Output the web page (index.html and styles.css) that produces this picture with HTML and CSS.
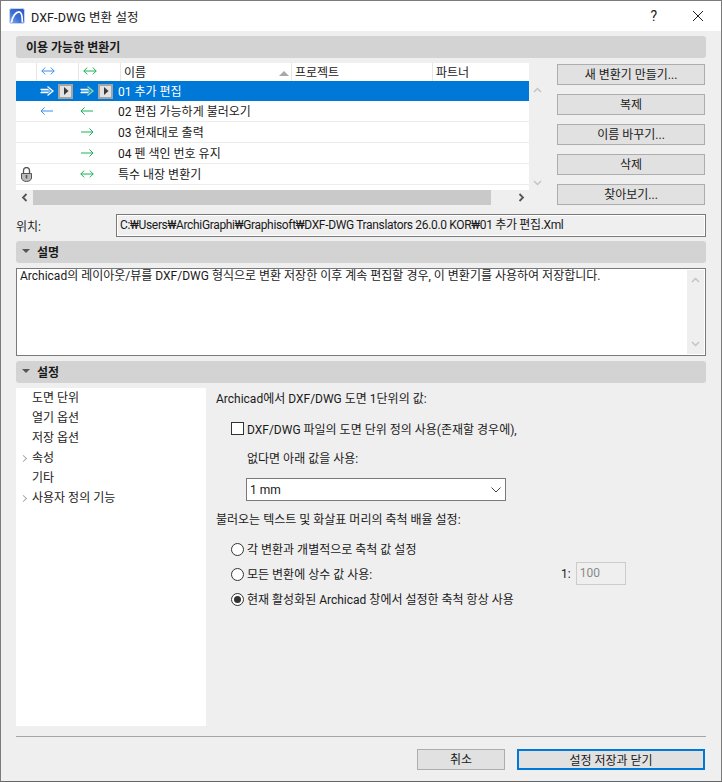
FILE: index.html
```html
<!DOCTYPE html>
<html lang="ko">
<head>
<meta charset="utf-8">
<title>DXF-DWG 변환 설정</title>
<link rel="stylesheet" href="styles.css">
</head>
<body>
<svg class="defs" width="0" height="0" aria-hidden="true">
  <defs>
    <symbol id="both" viewBox="0 0 14 10"><path d="M.8 5h12.4M4.2 1.600.8 5l3.400 3.400M9.800 1.600 13.200 5 9.800 8.400" fill="none" stroke="currentColor" stroke-width="1"/></symbol>
    <symbol id="left" viewBox="0 0 14 10"><path d="M1 5h12M4.600 1.400 1 5l3.600 3.600" fill="none" stroke="currentColor" stroke-width="1"/></symbol>
    <symbol id="right" viewBox="0 0 14 10"><path d="M1 5h11.500M9.400 1.400 13 5 9.400 8.600" fill="none" stroke="currentColor" stroke-width="1"/></symbol>
    <symbol id="fat" viewBox="0 0 14 10"><path d="M.5 3.300h8M.5 6.700h8" fill="none" stroke="#fff" stroke-width="1.300"/><path d="M1 5h8" stroke="#fff" stroke-opacity=".45" stroke-width="2.200" fill="none"/><path d="M7.500.6 13 5 7.500 9.400" fill="none" stroke="currentColor" stroke-width="1.300"/><path d="M8.500 3.300 10.300 5 8.500 6.700" fill="none" stroke="currentColor" stroke-opacity=".7" stroke-width="1"/></symbol>
    <symbol id="tri" viewBox="0 0 8 8"><path d="M2 0v8l4.500-4z" fill="#3c3c3c"/></symbol>
    <symbol id="up" viewBox="0 0 9 6"><path d="M1 5 4.500 1.500 8 5" fill="none" stroke="currentColor" stroke-width="1.500"/></symbol>
    <symbol id="down" viewBox="0 0 9 6"><path d="M1 1 4.500 4.500 8 1" fill="none" stroke="currentColor" stroke-width="1.500"/></symbol>
    <linearGradient id="logoFill" x1="0" y1="1" x2="1" y2="0"><stop offset="0" stop-color="#8fb0f0"/><stop offset=".45" stop-color="#3b6fd8"/><stop offset="1" stop-color="#2b57b8"/></linearGradient>
  </defs>
</svg>
<div class="window">
  <header class="titlebar">
    <svg class="logo" width="16" height="16" viewBox="0 0 16 16"><rect x=".5" y=".5" width="15" height="15" rx="2" fill="url(#logoFill)" stroke="#c6d4f0"/><path d="M2.500 14.500C3.500 8 7 3.800 10 3.800c2.600 0 3.400 4.500 3.400 10.700" fill="none" stroke="#fff" stroke-width="1.700"/></svg>
    <span class="title">DXF-DWG 변환 설정</span>
    <span class="help">?</span>
    <svg class="close" width="12" height="12" viewBox="0 0 12 12"><path d="M1 1l10 10M11 1 1 11" stroke="#222" stroke-width="1" fill="none"/></svg>
  </header>

  <main class="content">
    <div class="section strong">이용 가능한 변환기</div>

    <div class="translators">
      <div class="listwrap">
        <div class="table">
          <div class="row head">
            <span class="c0"></span>
            <span class="c1 sep"><svg class="ar blue"><use href="#both"/></svg></span>
            <span class="c2 sep"><svg class="ar green"><use href="#both"/></svg></span>
            <span class="c3 sep">이름<i class="sort"></i></span>
            <span class="c4 sep">프로젝트</span>
            <span class="c5 sep">파트너</span>
          </div>
          <div class="row sel">
            <span class="c0"></span>
            <span class="c1"><svg class="ar white"><use href="#fat"/></svg><b class="play"><svg width="8" height="8"><use href="#tri"/></svg></b></span>
            <span class="c2"><svg class="ar ltgreen"><use href="#fat"/></svg><b class="play"><svg width="8" height="8"><use href="#tri"/></svg></b></span>
            <span class="name">01 추가 편집</span>
          </div>
          <div class="row">
            <span class="c0"></span>
            <span class="c1"><svg class="ar blue"><use href="#left"/></svg></span>
            <span class="c2"><svg class="ar green"><use href="#left"/></svg></span>
            <span class="name">02 편집 가능하게 불러오기</span>
          </div>
          <div class="row">
            <span class="c0"></span>
            <span class="c1"></span>
            <span class="c2"><svg class="ar green"><use href="#right"/></svg></span>
            <span class="name">03 현재대로 출력</span>
          </div>
          <div class="row">
            <span class="c0"></span>
            <span class="c1"></span>
            <span class="c2"><svg class="ar green"><use href="#right"/></svg></span>
            <span class="name">04 펜 색인 번호 유지</span>
          </div>
          <div class="row">
            <span class="c0"><svg width="11" height="15" viewBox="0 0 11 15"><path d="M2.500 6V3.500a3 3 0 0 1 6 0V6" fill="none" stroke="#555" stroke-width="1.300"/><path d="M.5 6.500h10V11c0 2-2.500 3.500-5 3.500S.5 13 .5 11z" fill="#bcbcbc" stroke="#555"/><rect x="4.700" y="8" width="1.600" height="3.500" fill="#555"/></svg></span>
            <span class="c1"></span>
            <span class="c2"><svg class="ar green"><use href="#both"/></svg></span>
            <span class="name">특수 내장 변환기</span>
          </div>
        </div>
        <div class="vscroll">
          <svg class="sa" width="9" height="6"><use href="#up"/></svg>
          <svg class="sa" width="9" height="6"><use href="#down"/></svg>
        </div>
        <div class="hscroll">
          <svg width="7" height="9" viewBox="0 0 7 9"><path d="M5.500 1 2 4.500 5.500 8" fill="none" stroke="#555" stroke-width="1.800"/></svg>
          <span class="thumb"></span>
          <svg width="7" height="9" viewBox="0 0 7 9"><path d="M1.500 1 5 4.500 1.500 8" fill="none" stroke="#555" stroke-width="1.800"/></svg>
        </div>
      </div>
      <div class="actions">
        <button class="btn">새 변환기 만들기...</button>
        <button class="btn">복제</button>
        <button class="btn">이름 바꾸기...</button>
        <button class="btn">삭제</button>
        <button class="btn">찾아보기...</button>
      </div>
    </div>

    <div class="location">
      <span class="loclabel">위치:</span>
      <div class="path">C:₩Users₩ArchiGraphi₩Graphisoft₩DXF-DWG Translators 26.0.0 KOR₩01 추가 편집.Xml</div>
    </div>

    <div class="section tight"><i class="caret"></i>설명</div>
    <div class="desc">
      <p>Archicad의 레이아웃/뷰를 DXF/DWG 형식으로 변환 저장한 이후 계속 편집할 경우, 이 변환기를 사용하여 저장합니다.</p>
      <div class="descscroll">
        <svg width="9" height="6"><use href="#up"/></svg>
        <svg width="9" height="6"><use href="#down"/></svg>
      </div>
    </div>

    <div class="section tight"><i class="caret"></i>설정</div>
    <div class="settings">
      <ul class="tree">
        <li>도면 단위</li>
        <li>열기 옵션</li>
        <li>저장 옵션</li>
        <li class="more">속성</li>
        <li>기타</li>
        <li class="more">사용자 정의 기능</li>
      </ul>
      <div class="panel">
        <p class="l1">Archicad에서 DXF/DWG 도면 1단위의 값:</p>
        <label class="check"><i class="box"></i>DXF/DWG 파일의 도면 단위 정의 사용(존재할 경우에),</label>
        <p class="l2">없다면 아래 값을 사용:</p>
        <div class="select">1 mm<svg width="10" height="6" viewBox="0 0 10 6"><path d="M.5.5 5 5 9.500.5" fill="none" stroke="#444"/></svg></div>
        <p class="l3">불러오는 텍스트 및 화살표 머리의 축척 배율 설정:</p>
        <div class="radio r1"><i class="dot"></i>각 변환과 개별적으로 축척 값 설정</div>
        <div class="radio r2"><i class="dot"></i>모든 변환에 상수 값 사용:<span class="ratio">1:<span class="num">100</span></span></div>
        <div class="radio r3"><i class="dot on"></i>현재 활성화된 Archicad 창에서 설정한 축척 항상 사용</div>
      </div>
    </div>

    <footer class="footer">
      <button class="btn cancel">취소</button>
      <button class="btn primary">설정 저장과 닫기</button>
    </footer>
  </main>
</div>
</body>
</html>
```
FILE: styles.css
```css
* { box-sizing: border-box; }
html, body { margin: 0; height: 100%; }
body {
  font-family: Roboto, "Noto Sans CJK KR", sans-serif;
  font-size: 12px;
  color: #1a1a1a;
  background: #efefef;
}
.defs { position: absolute; }
.window {
  height: 782px;
  border: 1px solid #7b7b7b;
  border-bottom-color: #666;
  background: #efefef;
  display: flex;
  flex-direction: column;
}
.titlebar {
  height: 30px;
  background: #fff;
  display: flex;
  align-items: center;
  padding-left: 8px;
  flex: none;
}
.logo { flex: none; }
.title { margin-left: 6px; font-size: 12.500px; letter-spacing: .1px; }
.help { margin-left: auto; font-size: 14px; margin-right: 35px; }
.close { margin-right: 17px; }
.content {
  flex: 1;
  padding: 5px 15px 0;
  display: flex;
  flex-direction: column;
}
.section {
  height: 22px;
  padding-bottom: 2px;
  background: #d3d3d3;
  border-radius: 3px;
  padding-left: 10px;
  font-weight: 700;
  font-size: 12px;
  display: flex;
  align-items: center;
  flex: none;
}
.section.tight { padding-left: 6px; }
.caret {
  width: 0; height: 0;
  border-left: 4px solid transparent;
  border-right: 4px solid transparent;
  border-top: 4px solid #555;
  margin-right: 7px;
}
.translators { display: flex; margin-top: 5px; height: 143px; flex: none; }
.listwrap {
  width: 529px;
  flex: none;
  display: grid;
  grid-template-columns: 513px 16px;
  grid-template-rows: 127px 15px;
}
.table { background: #fff; overflow: hidden; }
.row {
  display: flex;
  align-items: center;
  height: 21px;
  border-bottom: 1px solid #ececec;
  position: relative;
}
.row.head { height: 18px; border: 0; align-items: stretch; }
.row.head span { display: flex; align-items: center; padding-bottom: 2px; }
.row.sel { height: 20px; background: #0078d7; color: #fff; border: 0; }
.row span { flex: none; }
.c0 { width: 20px; display: flex; justify-content: center; padding-top: 1px; }
.c1 { width: 42px; display: flex; align-items: center; padding-left: 3px; }
.c2 { width: 42px; display: flex; align-items: center; padding-left: 1px; }
.row.head .c1 { padding-left: 2px; }
.row.head .c2 { padding-left: 2px; }
.row .c1 .ar, .row .c2 .ar { margin-left: 1px; margin-right: 4px; }
.row.head .c1 .ar, .row.head .c2 .ar { margin-left: 2px; }
.c3 { width: 171px; padding-left: 3px; position: relative; }
.c4 { width: 141px; padding-left: 3px; }
.c5 { width: 96px; padding-left: 3px; }
.sep { border-left: 1px solid #e6e6e6; }
.sort {
  position: absolute; right: 2px; bottom: 5px;
  width: 0; height: 0;
  border-left: 5px solid transparent;
  border-right: 5px solid transparent;
  border-bottom: 5px solid #a8a8a8;
}
.name { margin-left: -2px; padding-bottom: 2px; }
.ar { width: 14px; height: 10px; flex: none; }
.blue { color: #3f8cf3; }
.green { color: #1db257; }
.white { color: #fff; }
.ltgreen { color: #8fe3a4; }
.play {
  width: 15px; height: 15px;
  background: #e2e2e2;
  border: 2px solid #a4a4a4;
  display: flex; align-items: center; justify-content: center;
  flex: none;
}
.vscroll {
  display: flex; flex-direction: column; justify-content: space-between; align-items: center;
  padding: 24px 0 4px; color: #c4c4c4;
}
.hscroll {
  grid-column: 1 / 3;
  display: flex; align-items: center;
  padding-left: 5px;
}
.hscroll .thumb { width: 458px; height: 15px; background: #c9c9c9; margin: 0 27px 0 5px; }
.actions {
  margin-left: 12px;
  width: 148px;
  flex: none;
  display: flex; flex-direction: column; gap: 9px;
  padding-top: 1px;
}
.btn {
  font: inherit;
  color: inherit;
  height: 21px;
  background: #e1e1e1;
  border: 1px solid #adadad;
  padding: 0 0 2px;
  flex: none;
}
.location { display: flex; align-items: center; height: 24px; margin-top: 7px; flex: none; }
.loclabel { width: 100px; }
.path {
  flex: 1;
  height: 23px;
  border: 1px solid #7a7a7a;
  background: #efefef;
  padding-left: 3px;
  line-height: 21px;
  box-shadow: inset 1px 1px 0 #fff, inset -1px -1px 0 #fff;
  letter-spacing: -.34px;
}
.location + .section { margin-top: 4px; }
.desc {
  height: 88px;
  margin: 5px 0;
  border: 1px solid #7a7a7a;
  background: #fff;
  display: flex;
  justify-content: space-between;
  flex: none;
}
.desc p { margin: 0; padding-left: 3px; line-height: 14px; }
.descscroll {
  width: 17px;
  margin: 1px 1px 1px 0;
  background: #efefef;
  display: flex; flex-direction: column; justify-content: space-between; align-items: center;
  padding: 7px 0;
  color: #c4c4c4;
}
.settings { display: flex; margin-top: 5px; height: 338px; flex: none; }
.tree {
  width: 190px;
  background: #fff;
  list-style: none;
  margin: 0;
  padding: 1px 0 0 16px;
}
.tree li { height: 20px; line-height: 18px; position: relative; }
.tree .more::before {
  content: "";
  position: absolute;
  left: -11px; top: 7px;
  width: 4px; height: 4px;
  border-top: 1px solid #aaa;
  border-right: 1px solid #aaa;
  transform: rotate(45deg);
}
.panel { flex: 1; padding-left: 10px; position: relative; }
.panel p { margin: 0; }
.l1 { padding-top: 2px; height: 18px; line-height: 18px; }
.check { display: flex; align-items: center; height: 20px; margin: 12px 0 0 15px; }
.box {
  width: 13px; height: 13px;
  background: #fff;
  border: 1px solid #333;
  margin-right: 3px;
}
.panel .l2 { margin: 11px 0 0 31px; height: 20px; line-height: 20px; }
.select {
  width: 260px; height: 23px;
  margin: 9px 0 0 30px;
  background: #fff;
  border: 1px solid #7a7a7a;
  display: flex; align-items: center; justify-content: space-between;
  padding: 0 4px 0 3px;
}
.panel .l3 { margin-top: 9px; height: 20px; line-height: 20px; }
.radio { display: flex; align-items: center; height: 20px; margin-left: 15px; padding-bottom: 1px; position: relative; }
.r1 { margin-top: 9px; }
.r2, .r3 { margin-top: 5px; }
.dot {
  width: 13px; height: 13px;
  border: 1px solid #333;
  border-radius: 50%;
  background: #fff;
  margin: 1px 3px 0 0;
  flex: none;
  position: relative;
}
.dot.on::after {
  content: "";
  position: absolute;
  inset: 2px;
  border-radius: 50%;
  background: #333;
}
.ratio {
  position: absolute; left: 330px;
  display: flex; align-items: center; gap: 5px;
}
.num {
  width: 50px; height: 23px;
  border: 1px solid #ccc;
  color: #8a8a8a;
  padding-left: 3px;
  line-height: 21px;
}
.footer {
  margin-top: 10px;
  border-top: 1px solid #a5a5a5;
  padding: 12px 0 0 401px;
  display: flex;
  gap: 12px;
  flex: none;
}
.cancel { width: 88px; }
.primary { width: 188px; border: 2px solid #0078d7; }
```
